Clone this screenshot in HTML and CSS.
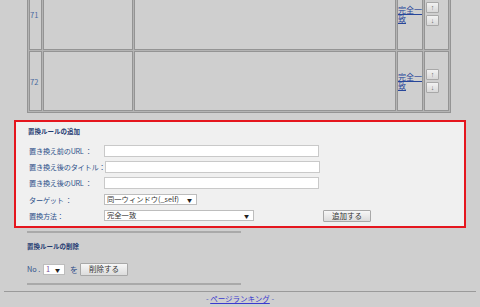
FILE: index.html
```html
<!DOCTYPE html>
<html lang="ja">
<head>
  <meta charset="UTF-8">
  <title>置換ルール</title>
  <link rel="stylesheet" href="styles.css">
</head>
<body>
  <table class="rules">
    <tr class="row-first">
      <td class="num">71</td>
      <td class="col-a"></td>
      <td class="col-b"></td>
      <td class="match"><a href="#">完全一致</a></td>
      <td class="move"><button class="arrow">↑</button><button class="arrow">↓</button></td>
    </tr>
    <tr class="row">
      <td class="num">72</td>
      <td class="col-a"></td>
      <td class="col-b"></td>
      <td class="match"><a href="#">完全一致</a></td>
      <td class="move"><button class="arrow">↑</button><button class="arrow">↓</button></td>
    </tr>
  </table>

  <div class="add-box">
    <h2>置換ルールの追加</h2>
    <form class="add-form">
      <div class="field"><label>置き換え前のURL ：</label><input type="text" class="wide"></div>
      <div class="field"><label>置き換え後のタイトル：</label><input type="text" class="wide"></div>
      <div class="field"><label>置き換え後のURL ：</label><input type="text" class="wide"></div>
      <div class="field field-sel">
        <label>ターゲット ：</label>
        <span class="sel sel-target"><select><option>同一ウィンドウ(_self)</option></select></span>
      </div>
      <div class="field field-sel">
        <label>置換方法：</label>
        <span class="sel sel-method"><select><option>完全一致</option></select></span>
        <button type="button" class="btn btn-add">追加する</button>
      </div>
    </form>
  </div>

  <div class="delete">
    <div class="rule"></div>
    <h2>置換ルールの削除</h2>
    <div class="del-row">
      <span class="no">No .</span>
      <span class="sel sel-no"><select><option>1</option></select></span>
      <span class="wo">を</span>
      <button type="button" class="btn btn-del">削除する</button>
    </div>
    <div class="rule"></div>
  </div>

  <div class="footer-line"></div>
  <div class="footer">- <a href="#">ページランキング</a> -</div>
</body>
</html>
```

FILE: styles.css
```css
body {
  margin: 0;
  background: #cfcfcf;
  font-family: "Noto Sans CJK JP", "Liberation Sans", sans-serif;
  color: #2f508a;
  overflow: hidden;
}

.rules {
  margin: -24px 0 0 27px;
  border-collapse: separate;
  border-spacing: 1px;
  background: #b4b4b4;
  border: 1px solid #949494;
}

.rules td {
  border: 1px solid #949494;
  background: #cfcfcf;
  padding: 0;
  vertical-align: middle;
}

.row-first { height: 72px; }
.row { height: 60px; }

.num {
  width: 11px;
  font-size: 7.5px;
  color: #4a6aa0;
}
.col-a { width: 88px; }
.col-b { width: 260px; }

.match {
  width: 24px;
  font-size: 8px;
  line-height: 9px;
}

.match a {
  color: #27469a;
  text-decoration: underline;
}

.move {
  width: 22px;
  padding: 0 0 0 1px !important;
}

.arrow {
  display: block;
  width: 13px;
  height: 11px;
  margin: 2px 0;
  padding: 0;
  font-size: 7px;
  line-height: 9px;
  color: #666;
  background: linear-gradient(#f2f2f2, #d8d8d8);
  border: 1px solid #a8a8a8;
  border-radius: 1px;
}

.add-box {
  margin: 7px 14px 0 14px;
  border: 2px solid #e5161e;
  background: #f0f0f0;
  padding: 3px 12px 5px 12px;
}

h2 {
  margin: 0;
  font-size: 6.5px;
  line-height: 12px;
  font-weight: bold;
  color: #1f3b72;
}

.add-form {
  margin-top: 8px;
  display: flex;
  flex-direction: column;
  gap: 4px;
}

.field {
  display: flex;
  align-items: center;
  height: 12px;
}

.field-sel {
  height: 11px;
  margin-top: 1px;
}

.field label {
  flex: 0 0 75px;
  padding-left: 1px;
  font-size: 7.2px;
  letter-spacing: -0.25px;
  white-space: nowrap;
}

.wide {
  width: 215px;
  height: 12px;
  box-sizing: border-box;
  margin: 0;
  border: 1px solid #c9c9c9;
  background: #fff;
  padding: 0 2px;
}

.sel {
  position: relative;
  display: inline-flex;
  align-items: center;
  height: 11px;
  box-sizing: border-box;
  border: 1px solid #bdbdbd;
  background: #fff;
}

.sel select {
  display: block;
  appearance: none;
  border: none;
  background: transparent;
  font-family: inherit;
  font-size: 7.3px;
  color: #333;
  height: 9px;
  line-height: 9px;
  padding: 0 0 0 2px;
  margin: 0;
  width: 100%;
  overflow: hidden;
}

.sel::after {
  content: "▼";
  position: absolute;
  right: 4px;
  top: 1px;
  font-size: 5px;
  line-height: 7px;
  color: #222;
}

.sel-target { width: 93px; }
.sel-method { width: 150px; }
.sel-no { width: 22px; }
.sel-no select { color: #7a4a9a; }

.btn {
  font-family: inherit;
  font-size: 7.5px;
  color: #333;
  background: linear-gradient(#f7f7f7, #dcdcdc);
  border: 1px solid #a8a8a8;
  border-radius: 1px;
  padding: 0;
  line-height: 10px;
}

.btn-add {
  margin-left: 69px;
  width: 48px;
  height: 12px;
}

.delete {
  margin: 3px 0 0 27px;
  width: 214px;
}

.rule {
  height: 2px;
  background: #a9a9a9;
}

.delete h2 {
  margin-top: 7px;
}

.del-row {
  display: flex;
  align-items: center;
  height: 14px;
  margin: 10px 0 7px 0;
  font-size: 7.3px;
}

.no { width: 16px; }
.wo {
  margin: 0 2px 0 5px;
  font-size: 8px;
}

.btn-del {
  width: 48px;
  height: 13px;
}

.footer-line {
  margin: 6px 4px 0 4px;
  height: 1px;
  background: #9a9a9a;
}

.footer {
  text-align: center;
  font-size: 7.5px;
  line-height: 14px;
  color: #4a5ac0;
}

.footer a {
  color: #3a3ad0;
}
```
